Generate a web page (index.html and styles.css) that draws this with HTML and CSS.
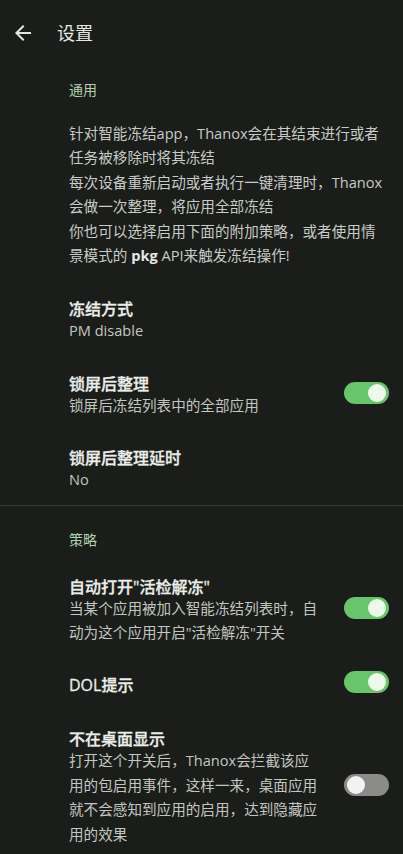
FILE: index.html
```html
<!DOCTYPE html>
<html lang="zh-CN">
<head>
<meta charset="utf-8">
<title>设置</title>
<link rel="stylesheet" href="styles.css">
</head>
<body>
<header class="topbar">
  <svg class="back" viewBox="0 0 24 24" width="24" height="24"><path d="M20 11H7.83l5.59-5.59L12 4l-8 8 8 8 1.41-1.41L7.83 13H20v-2z"/></svg>
  <h1 class="title">设置</h1>
</header>

<section class="group">
  <h2 class="cat cat-first">通用</h2>
  <p class="desc">针对智能冻结app，Thanox会在其结束进行或者任务被移除时将其冻结<br>每次设备重新启动或者执行一键清理时，Thanox会做一次整理，将应用全部冻结<br>你也可以选择启用下面的附加策略，或者使用情景模式的 <b>pkg</b> API来触发冻结操作!</p>

  <div class="item">
    <div class="text">
      <div class="t">冻结方式</div>
      <div class="s">PM disable</div>
    </div>
  </div>
  <div class="item">
    <div class="text">
      <div class="t">锁屏后整理</div>
      <div class="s">锁屏后冻结列表中的全部应用</div>
    </div>
    <span class="sw on"><span class="knob"></span></span>
  </div>
  <div class="item last">
    <div class="text">
      <div class="t">锁屏后整理延时</div>
      <div class="s">No</div>
    </div>
  </div>
</section>

<section class="group divided">
  <h2 class="cat cat-second">策略</h2>
  <div class="item">
    <div class="text">
      <div class="t">自动打开"活检解冻"</div>
      <div class="s">当某个应用被加入智能冻结列表时，自动为这个应用开启"活检解冻"开关</div>
    </div>
    <span class="sw on"><span class="knob"></span></span>
  </div>
  <div class="item single">
    <div class="text">
      <div class="t">DOL提示</div>
    </div>
    <span class="sw on"><span class="knob"></span></span>
  </div>
  <div class="item">
    <div class="text">
      <div class="t">不在桌面显示</div>
      <div class="s">打开这个开关后，Thanox会拦截该应用的包启用事件，这样一来，桌面应用就不会感知到应用的启用，达到隐藏应用的效果</div>
    </div>
    <span class="sw off"><span class="knob"></span></span>
  </div>
</section>
</body>
</html>
```

FILE: styles.css
```css
html, body {
  margin: 0;
  padding: 0;
}
body {
  background: #1a1d1a;
  color: #e6e8e3;
  font-family: "Open Sans", "Noto Sans CJK SC", sans-serif;
  width: 403px;
  height: 854px;
  overflow: hidden;
}
.topbar {
  height: 66px;
  display: flex;
  align-items: center;
}
.back {
  fill: #e6e8e3;
  margin-left: 11px;
}
.title {
  margin: 0 0 0 22px;
  font-size: 18px;
  font-weight: 400;
  line-height: 24px;
  color: #e6e8e3;
}
.cat {
  margin: 0;
  padding-left: 69px;
  font-size: 14px;
  font-weight: 400;
  line-height: 20px;
  color: #b3d0b0;
}
.cat-first {
  padding-top: 14px;
}
.cat-second {
  padding-top: 24px;
  margin-bottom: 12px;
}
.desc {
  margin: 21px 14px 17px 69px;
  font-size: 14.6px;
  line-height: 24.4px;
  color: #c9cbc6;
}
.desc b {
  font-weight: 700;
  color: #e6e8e3;
}
.divided {
  border-top: 1px solid #363a36;
}
.item {
  display: flex;
  align-items: center;
  padding: 16px 14px 16px 69px;
}
.item.last {
  padding-bottom: 13px;
}
.item.single {
  padding-bottom: 20px;
}
.text {
  flex: 1;
  min-width: 0;
}
.t {
  font-size: 16px;
  line-height: 18px;
  font-weight: 500;
  color: #eceee9;
  -webkit-text-stroke: 0.3px #eceee9;
}
.s {
  font-size: 14.6px;
  line-height: 24.4px;
  color: #c4c6c1;
}
.sw {
  flex: none;
  width: 45px;
  height: 22px;
  border-radius: 11px;
  margin: -10px 0 -4px 24px;
  display: flex;
  align-items: center;
  box-sizing: border-box;
  padding: 0 3px;
}
.sw.on {
  background: #69c56c;
  justify-content: flex-end;
}
.sw.off {
  background: #8b8c8a;
  justify-content: flex-start;
}
.knob {
  width: 18px;
  height: 18px;
  border-radius: 50%;
}
.on .knob {
  background: #eef9ec;
}
.off .knob {
  background: #f2f2f2;
}
```
